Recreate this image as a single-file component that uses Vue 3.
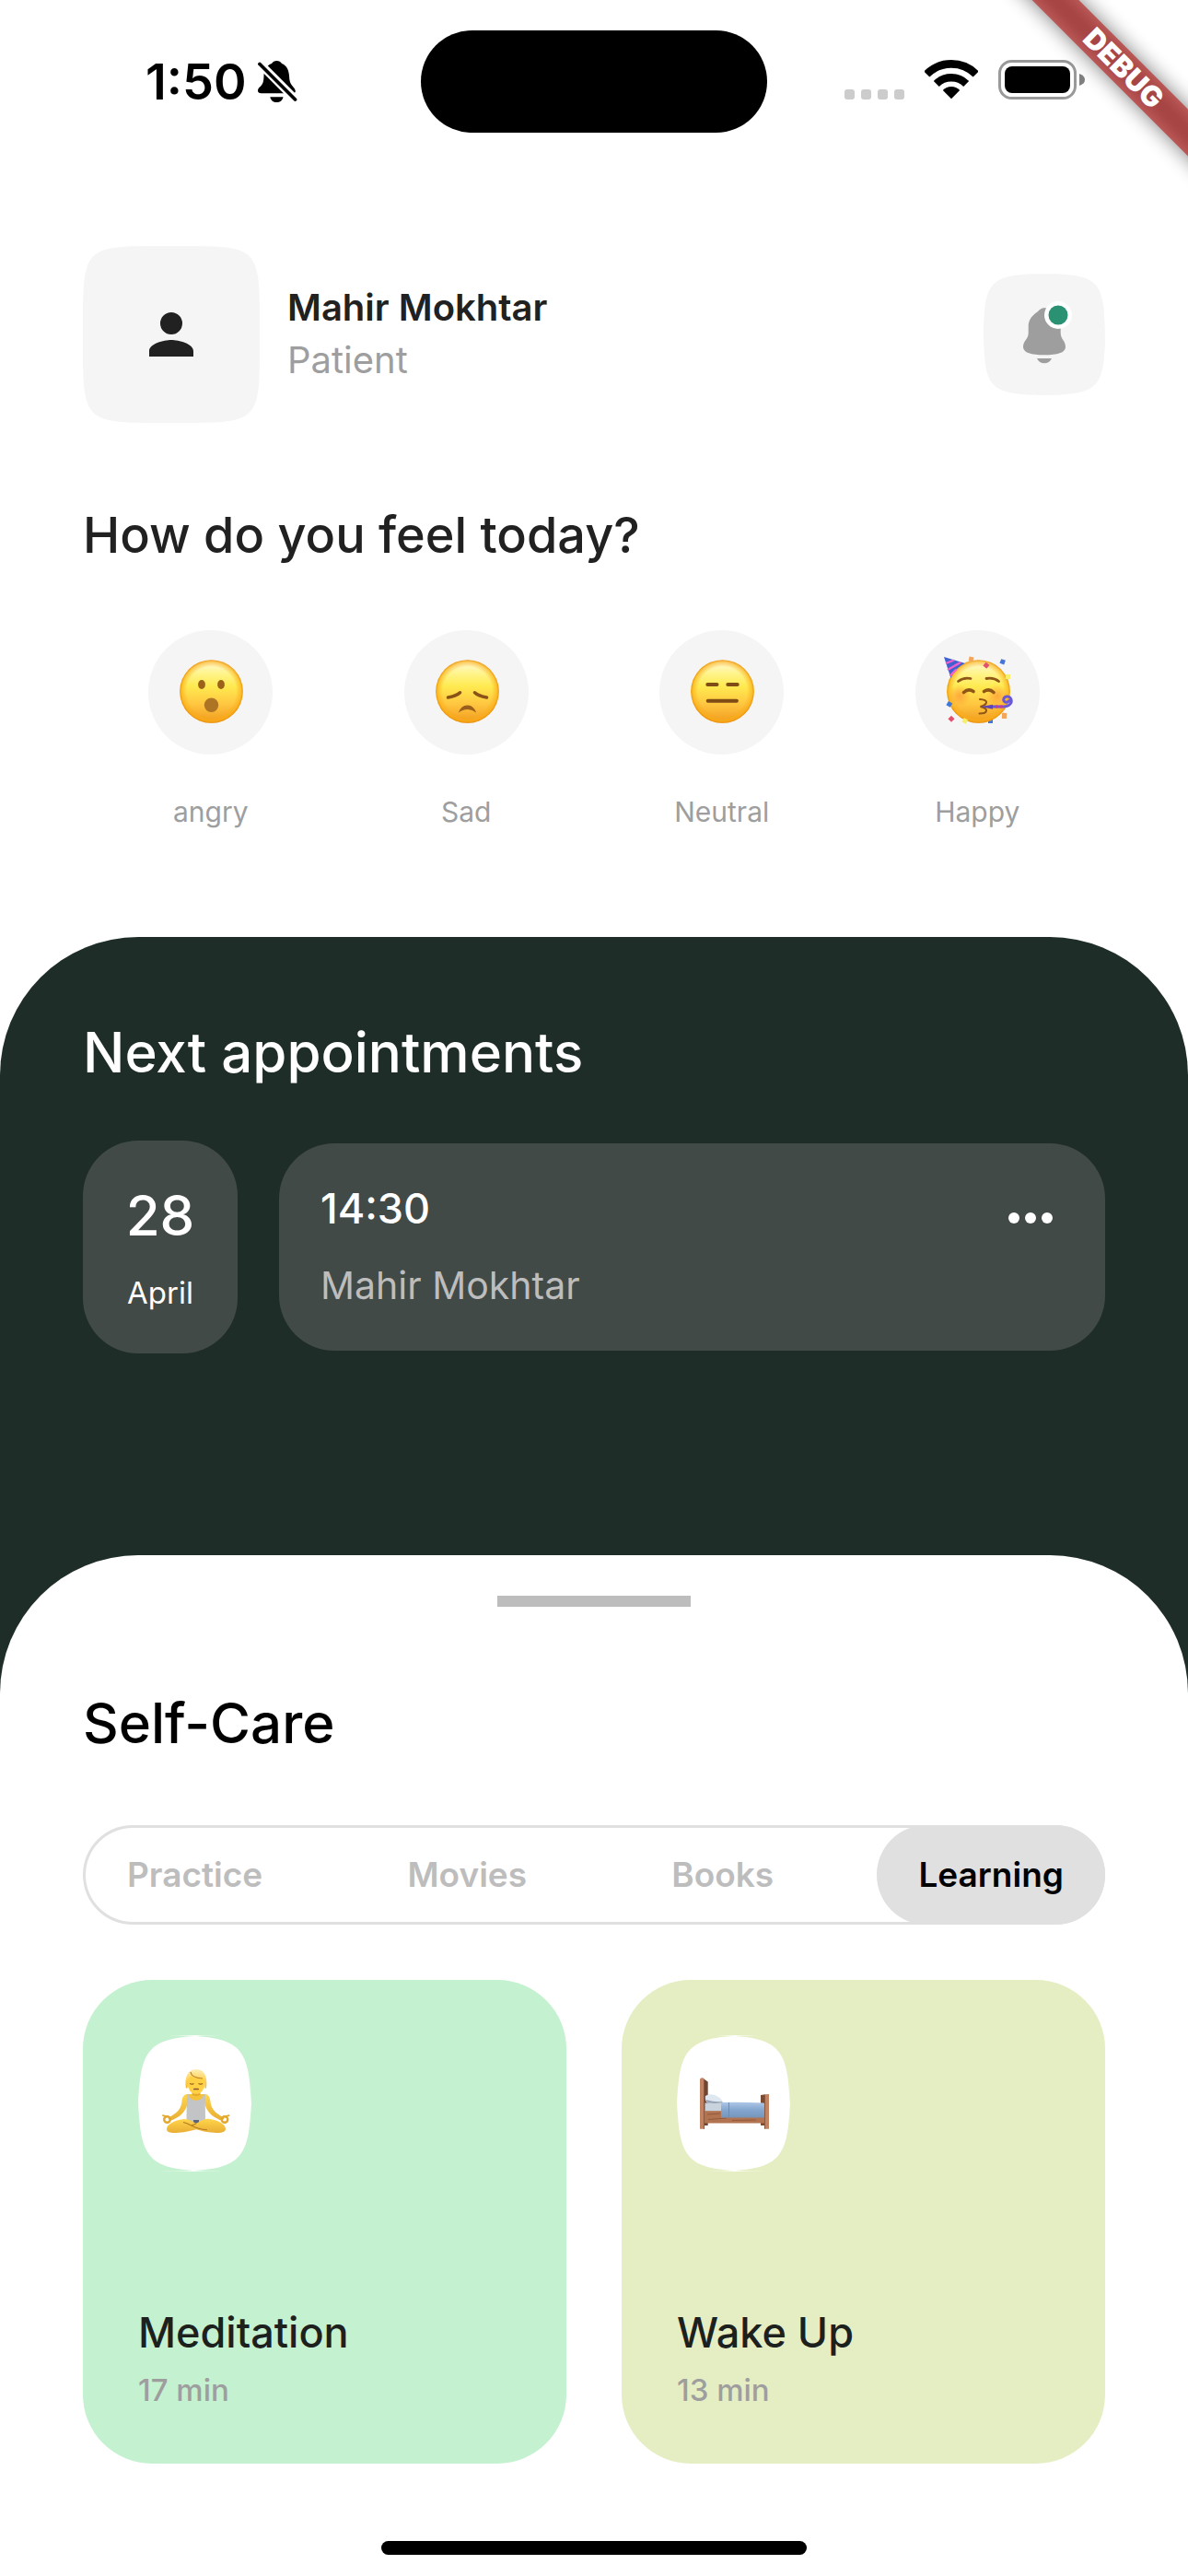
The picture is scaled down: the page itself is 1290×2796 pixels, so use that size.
<script setup>
import { ref } from 'vue'

const moods = [
  { id: 'angry', label: 'angry' },
  { id: 'sad', label: 'Sad' },
  { id: 'neutral', label: 'Neutral' },
  { id: 'happy', label: 'Happy' },
]

const confetti = [
  { x: 61, y: 32, fill: '#f3a65a', turn: 10 },
  { x: 77, y: 39, fill: '#e2506f', turn: 40 },
  { x: 95, y: 35, fill: '#4775d6', turn: 20 },
  { x: 101, y: 51, fill: '#f7ee6b', turn: 0 },
  { x: 37, y: 81, fill: '#3f78d8', turn: 30 },
  { x: 39, y: 97, fill: '#e2506f', turn: 45 },
  { x: 54, y: 99, fill: '#f7ee6b', turn: 30 },
  { x: 82, y: 98, fill: '#3f78d8', turn: 0 },
  { x: 97, y: 93, fill: '#f3a65a', turn: 8 },
]

const tabs = ['Practice', 'Movies', 'Books', 'Learning']
const activeTab = ref('Learning')

const activities = [
  { id: 'meditation', title: 'Meditation', time: '17 min' },
  { id: 'wake', title: 'Wake Up', time: '13 min' },
]

// Rounded shape whose corners ease continuously into the sides.
function softRect(w, h, r) {
  return [
    `M0 ${r}C0 0 0 0 ${r} 0`,
    `L${w - r} 0C${w} 0 ${w} 0 ${w} ${r}`,
    `L${w} ${h - r}C${w} ${h} ${w} ${h} ${w - r} ${h}`,
    `L${r} ${h}C0 ${h} 0 ${h} 0 ${h - r}Z`,
  ].join('')
}
</script>

<template>
  <div class="screen">
    <header class="status">
      <div class="status-left">
        <span class="clock">1:50</span>
        <svg class="muted" viewBox="0 0 43 46" aria-label="Silent mode">
          <path d="M20.500 0c2.500 0 4.300 1 5.500 3 5 2 7.500 6.500 8 13 .4 6.500 1 8.500 4.500 12.500 3.500 4 3 6.800-1.500 6.800H3.500C-.8 35.300-1 31 2 28.500c3.500-3 4.300-5.500 4.500-12.500.3-6.500 3-11 8.500-13 1.200-2 3-3 5.500-3z" />
          <path d="M13.300 39.200h14.200c-.8 4-3.500 5.900-7.100 5.900s-6.300-1.900-7.100-5.900z" />
          <path d="M2 3l39 39" stroke="#fff" stroke-width="9" />
          <path d="M2 3.500L40.500 42" stroke="#000" stroke-width="3.800" stroke-linecap="round" />
        </svg>
      </div>
      <div class="island"></div>
      <div class="status-right">
        <div class="signal"><i v-for="n in 4" :key="n"></i></div>
        <svg class="wifi" viewBox="0 0 58 43" aria-label="Wi-Fi" fill="none" stroke="#000">
          <path d="M2.300 15.500a37.700 37.700 0 0 1 53.400 0" stroke-width="8.600" />
          <path d="M12.800 26a22.900 22.900 0 0 1 32.400 0" stroke-width="8.400" />
          <path d="M29 42.200l-9.200-9.300a13 13 0 0 1 18.400 0z" fill="#000" stroke="none" />
        </svg>
        <svg class="battery" viewBox="0 0 95 43" aria-label="Battery full">
          <rect x="1.500" y="1.500" width="82" height="40" rx="13" fill="none" stroke="#999" stroke-width="3" />
          <rect x="7" y="7" width="71" height="29" rx="8" />
          <path d="M88 15q6 2 6 6.500T88 28z" fill="#808080" />
        </svg>
      </div>
    </header>

    <svg class="debug" viewBox="0 0 250 250" aria-label="Debug build">
      <defs>
        <filter id="ribbon-blur" x="-30%" y="-100%" width="160%" height="300%">
          <feGaussianBlur stdDeviation="11" />
        </filter>
      </defs>
      <g transform="translate(178 72) rotate(45)">
        <rect x="-200" y="-18" width="400" height="36" fill="#000" opacity=".5" filter="url(#ribbon-blur)" />
        <rect x="-200" y="-18" width="400" height="36" fill="#b71c1c" opacity=".63" />
        <text class="debug-text" x="3" y="11" text-anchor="middle">DEBUG</text>
      </g>
    </svg>

    <section class="profile">
      <svg class="avatar" viewBox="0 0 192 192" aria-label="Profile picture">
        <path :d="softRect(192, 192, 90)" fill="#f5f5f5" />
        <path d="M96 96a12 12 0 1 0 0-24 12 12 0 0 0 0 24zM96 102c-8 0-24 4-24 12v6h48v-6c0-8-16-12-24-12z" fill="#212121" />
      </svg>
      <div class="who">
        <p class="name">Mahir Mokhtar</p>
        <p class="role">Patient</p>
      </div>
      <button class="alerts" type="button" aria-label="Notifications">
        <svg viewBox="0 0 132 132">
          <path :d="softRect(132, 132, 90)" fill="#f5f5f5" />
          <path d="M66 37.300c-4 0-5.200 2.500-7.500 4.200C52.500 45.500 48.700 50.500 48.700 57v7.500c0 6.500-5.700 8.500-5.700 15 0 6.500 9 8.800 23 8.800s23-2.300 23-8.800c0-6.500-5.300-8.500-5.300-15V57c0-6.500-4.200-11.500-10.200-15.500-2.300-1.700-3.500-4.200-7.500-4.200zM58 92h16c-1.500 3.600-4.400 5.300-8 5.300S59.500 95.600 58 92z" fill="#9e9e9e" />
          <circle cx="81" cy="45" r="15" fill="#fff" />
          <circle cx="81" cy="45" r="10.500" fill="#2a9272" />
        </svg>
      </button>
    </section>

    <section class="feelings">
      <h1 class="question">How do you feel today?</h1>
      <div class="moods">
        <button v-for="mood in moods" :key="mood.id" class="mood" type="button">
          <svg class="face" viewBox="0 0 135 135" aria-hidden="true">
            <defs>
              <linearGradient :id="`skin-${mood.id}`" x1="0" y1="0" x2="0" y2="1">
                <stop offset="0" stop-color="#fff9dc" />
                <stop offset=".22" stop-color="#fff48a" />
                <stop offset=".42" stop-color="#ffea50" />
                <stop offset=".7" stop-color="#ffc640" />
                <stop offset="1" stop-color="#f09a1e" />
              </linearGradient>
              <radialGradient :id="`rim-${mood.id}`">
                <stop offset=".78" stop-color="#f7a516" stop-opacity="0" />
                <stop offset=".93" stop-color="#fbae14" stop-opacity=".6" />
                <stop offset="1" stop-color="#e8900f" stop-opacity=".95" />
              </radialGradient>
              <radialGradient :id="`blush-${mood.id}`">
                <stop offset="0" stop-color="#ff8a35" stop-opacity=".6" />
                <stop offset="1" stop-color="#ff8a35" stop-opacity="0" />
              </radialGradient>
            </defs>
            <circle cx="67.500" cy="67.500" r="67.500" fill="#f5f5f5" />
            <template v-if="mood.id === 'happy'">
              <rect v-for="c in confetti.slice(7)" :key="c.x" :x="c.x - 3" :y="c.y - 3" width="5" height="6" :fill="c.fill" />
            </template>
            <circle cx="68.500" cy="66.500" r="34.300" :fill="`url(#skin-${mood.id})`" />
            <circle cx="68.500" cy="66.500" r="34.300" :fill="`url(#rim-${mood.id})`" />

            <g v-if="mood.id === 'angry'" fill="#9c621a">
              <ellipse cx="58" cy="59" rx="3.900" ry="5" />
              <ellipse cx="79" cy="59" rx="3.900" ry="5" />
              <circle cx="68.500" cy="81.300" r="7.700" fill="#ad7424" />
            </g>
            <g v-else-if="mood.id === 'sad'" fill="none" stroke="#8a5217" stroke-width="3.600" stroke-linecap="round">
              <path d="M47.500 73q9-1.500 13-5.200" />
              <path d="M76.500 67.800q4 3.700 13 5.200" />
              <path d="M58.800 89.500q3-8 9.700-8t9.700 8q-4.500-3.500-9.700-3.500t-9.700 3.500z" fill="#9a5f1a" stroke="none" />
            </g>
            <g v-else-if="mood.id === 'neutral'" fill="none" stroke="#7f4c16" stroke-width="4" stroke-linecap="round">
              <path d="M52.300 59h10.200M74.300 59h10.400M52.700 76.700h31.200" />
            </g>
            <g v-else>
              <circle cx="48" cy="71" r="12" :fill="`url(#blush-${mood.id})`" />
              <circle cx="89" cy="71" r="12" :fill="`url(#blush-${mood.id})`" />
              <path d="M31 29l23 7c-7 3-12.500 8.500-15.500 16z" fill="#3f62cf" />
              <path d="M33 36l9-3.500M35 43l14-8M37.500 49.500l7-7" stroke="#f25fd0" stroke-width="2.400" />
              <g fill="none" stroke="#8f5618" stroke-linecap="round">
                <path d="M46.500 55.500q6-4.500 13.500-3M77 52.500q8-1.500 13.500 3" stroke-width="2.800" />
                <path d="M52.500 67.500q5-4.500 10.500-1M74.500 66.500q5.500-3.500 10.500 1" stroke-width="3.600" />
                <path d="M70 75q7.500.5 7 3.500t-6.500 4.500q7 1.500 6.500 4.500t-7.500 3" stroke-width="2" />
              </g>
              <path d="M71 83l13-2.300v5z" fill="#6045b5" />
              <path d="M84 83h12q6-.5 8-4.500c1-4-1.500-7-5-6.500s-4.500 5-1.500 6 4.500-1 3.500-2.500" fill="none" stroke="#6b58d6" stroke-width="3" />
              <path d="M87 83h2.500M92 83h2.500" stroke="#d8348c" stroke-width="3" />
              <rect v-for="c in confetti.slice(0, 7).concat(confetti[8])" :key="c.x" :x="c.x - 3" :y="c.y - 3" width="5" height="5" :fill="c.fill" :transform="`rotate(${c.turn} ${c.x} ${c.y})`" />
            </g>
          </svg>
          <span class="mood-label">{{ mood.label }}</span>
        </button>
      </div>
    </section>

    <section class="appointments">
      <div class="agenda">
        <h2 class="agenda-title">Next appointments</h2>
        <div class="agenda-row">
          <div class="date">
            <span class="day">28</span>
            <span class="month">April</span>
          </div>
          <article class="visit">
            <div>
              <p class="visit-time">14:30</p>
              <p class="visit-name">Mahir Mokhtar</p>
            </div>
            <button class="more" type="button" aria-label="More options">
              <svg viewBox="0 0 24 24" fill="#fff">
                <circle cx="6" cy="12" r="2" />
                <circle cx="12" cy="12" r="2" />
                <circle cx="18" cy="12" r="2" />
              </svg>
            </button>
          </article>
        </div>
      </div>

      <section class="sheet">
        <div class="handle"></div>
        <h2 class="sheet-title">Self-Care</h2>
        <div class="tabs" role="tablist">
          <button
            v-for="tab in tabs"
            :key="tab"
            class="tab"
            :class="{ active: tab === activeTab }"
            type="button"
            role="tab"
            :aria-selected="tab === activeTab"
            @click="activeTab = tab"
          >{{ tab }}</button>
        </div>
        <div class="cards">
          <article v-for="item in activities" :key="item.id" class="card" :class="item.id">
            <svg class="card-icon" viewBox="0 0 123 148" aria-hidden="true">
              <path :d="softRect(123, 148, 120)" fill="#fff" />
              <g v-if="item.id === 'meditation'">
                <defs>
                  <linearGradient id="body-tone" x1="0" y1="0" x2="0" y2="1">
                    <stop offset="0" stop-color="#ffd54a" />
                    <stop offset="1" stop-color="#e9ae35" />
                  </linearGradient>
                  <linearGradient id="hair-tone" x1="0" y1="0" x2="0" y2="1">
                    <stop offset="0" stop-color="#fdeeb8" />
                    <stop offset=".5" stop-color="#ffd660" />
                    <stop offset="1" stop-color="#f5b52c" />
                  </linearGradient>
                </defs>
                <path d="M53 64c-4 .5-5 4-5.500 8-.5 5-2.500 8.500-5.500 11.500-3 2.500-6.500 4.500-9.500 6.500l2 3c4.500-1.500 9-4 12.500-7 3.500-3.500 5.500-7 6.500-11z" fill="url(#body-tone)" />
                <path d="M73 64c4 .5 5 4 5.500 8 .5 5 2.500 8.500 5.500 11.500 3 2.500 6.500 4.500 9.500 6.500l-2 3c-4.500-1.500-9-4-12.500-7-3.500-3.500-5.500-7-6.500-11z" fill="url(#body-tone)" />
                <path d="M53 64h20v10H53z" fill="#f6c23c" />
                <path d="M53 64.300h2c.5 4.500 4 6.500 8 6.500s7.500-2 8-6.500h2c-.5 8 0 19 0 28.500l-4 9H58l-5.500-9c0-9.500.5-20.500.5-28.500z" fill="#c3c4c6" />
                <path d="M58.500 60h9v4.500q-4.500 3-9 0z" fill="#e6aa2b" />
                <ellipse cx="63" cy="51.500" rx="9.700" ry="12.300" fill="#ffd043" />
                <path d="M52 57.500c-1-5-1.500-20.500 11-20.500s12 15.500 11 20.500h-1.500c0-5 0-7-1.500-10-5 0-10-.5-14-3.500-2.500 3-3 8-3.500 13.500z" fill="url(#hair-tone)" />
                <path d="M57 40c.5 4.500 6 6.500 13 7" fill="none" stroke="#bf7c20" stroke-width="1.200" />
                <path d="M56 52.500q2.500 1.200 4.500 0M65.500 52.500q2.500 1.200 4.500 0" fill="none" stroke="#8e5b1c" stroke-width="1.100" />
                <path d="M60.800 58.500h4.400" stroke="#8a5236" stroke-width="1.700" stroke-linecap="round" />
                <path d="M60 92h6v4h-6z" fill="#5b6478" />
                <path d="M50 91c-9 1-19 5-19 11 0 4 6 4.500 13 3.800 8-.6 14-2 19-3.500 5 1.500 11 3 19 3.500 7 .6 13 0 13-4 0-6-10-10-19-11-6 .5-9 3-13 5-4-2-7-4.500-13-4.800z" fill="url(#body-tone)" />
                <path d="M49 94.500c6 1.500 11 5 16 6.500q5 1.500 10 1.700M63 96l-5 2" fill="none" stroke="#b5791f" stroke-width="1.100" />
                <g fill="none" stroke="#e3a92e" stroke-width="2.400">
                  <circle cx="31.500" cy="91.500" r="3.300" />
                  <circle cx="94" cy="91.500" r="3.300" />
                  <path d="M30 88l-3-.8M95.500 88l3-.8" stroke-linecap="round" stroke-width="1.800" />
                </g>
              </g>
              <g v-else>
                <defs>
                  <linearGradient id="quilt-tone" x1="0" y1="0" x2="0" y2="1">
                    <stop offset="0" stop-color="#adc6e6" />
                    <stop offset=".5" stop-color="#84a6cf" />
                    <stop offset="1" stop-color="#7595bb" />
                  </linearGradient>
                </defs>
                <path d="M30 48l3.700 2.500V98H30z" fill="#6f4630" />
                <path d="M91 65l5-.8V98h-5z" fill="#7b4c34" />
                <path d="M30 81.500h66v14H30z" fill="#b27350" />
                <path d="M33 86l14-1M34 91.500l20-1.500M60 92.500l26-.5" stroke="#925a3c" stroke-width="1" />
                <path d="M30.500 73.500H50v8.700H30.500z" fill="#c8d3de" />
                <path d="M31 66c4-3 10-2 14 1 4 2.500 5 4.500 4.500 6.500H33c-2-1.500-2.500-5-2-7.500z" fill="#dfe7f1" />
                <path d="M33 73.500q8 .8 16 0l.6-1.500q-8 1-18-2z" fill="#97a4b5" />
                <path d="M48 73q24-.5 46 .6 1.500 0 1.500 2v13.800H48z" fill="url(#quilt-tone)" />
                <path d="M56.500 73v16.300" stroke="#6c8cb4" stroke-width="1" />
                <path d="M25 48q0-1.700 2.500-1.700T30 48v53.800h-5zM95.500 64.200l4.500-.3v37.900h-4.500z" fill="#c08260" />
                <path d="M29.500 48v53.800M95.500 65v36.800" stroke="#8a573c" stroke-width="1" />
              </g>
            </svg>
            <div>
              <h3 class="card-title">{{ item.title }}</h3>
              <p class="card-time">{{ item.time }}</p>
            </div>
          </article>
        </div>
        <div class="home-bar"></div>
      </section>
    </section>
  </div>
</template>

<style>
body {
  margin: 0;
  background: #fff;
}
</style>

<style scoped>
.screen {
  position: relative;
  overflow: hidden;
  font-family: Inter, 'Noto Sans', sans-serif;
  color: #212121;
  background: #fff;
}

h1,
h2,
h3,
p {
  margin: 0;
  font-weight: 400;
}

button {
  padding: 0;
  border: 0;
  background: none;
  font: inherit;
  color: inherit;
  cursor: pointer;
}

svg {
  display: block;
}

.status {
  display: grid;
  grid-template-columns: 1fr 376px 1fr;
  align-items: center;
  height: 177px;
}

.status-left {
  display: flex;
  align-items: center;
  gap: 12px;
  padding-left: 158px;
}

.clock {
  font-size: 54px;
  font-weight: 600;
  line-height: 60px;
  color: #000;
}

.muted {
  width: 43px;
  height: 46px;
}

.island {
  height: 111px;
  border-radius: 56px;
  background: #000;
}

.status-right {
  display: flex;
  justify-content: flex-end;
  align-items: center;
  gap: 22px;
  padding: 0 111px 4px 0;
}

.signal {
  display: flex;
  align-self: flex-end;
  gap: 7px;
}

.signal i {
  width: 11px;
  height: 11px;
  border-radius: 3px;
  background: #ccc;
}

.wifi {
  width: 58px;
  height: 43px;
}

.battery {
  width: 95px;
  height: 43px;
}

.debug {
  position: absolute;
  top: 0;
  right: 0;
  width: 250px;
  height: 250px;
  pointer-events: none;
}

.debug-text {
  font-size: 31px;
  font-weight: 900;
  fill: #fff;
}

.profile {
  display: flex;
  align-items: center;
  gap: 30px;
  padding: 90px 90px 0;
}

.avatar {
  width: 192px;
  height: 192px;
}

.who {
  flex: 1;
  padding-bottom: 3px;
  font-size: 40px;
  line-height: 57px;
}

.name {
  font-weight: 600;
}

.role {
  color: #9e9e9e;
}

.alerts {
  width: 132px;
  height: 132px;
}

.feelings {
  padding: 90px 90px 118px;
}

.question {
  font-size: 54px;
  font-weight: 500;
  line-height: 64px;
}

.moods {
  display: grid;
  grid-template-columns: repeat(4, 1fr);
  margin-top: 71px;
}

.mood {
  display: flex;
  flex-direction: column;
  align-items: center;
  gap: 44px;
}

.face {
  width: 135px;
  height: 135px;
}

.mood-label {
  font-size: 30px;
  line-height: 36px;
  color: #9e9e9e;
}

.appointments {
  border-radius: 150px 150px 0 0;
  background: #1e2d28;
  color: #fff;
}

.agenda {
  padding: 90px 90px 219px;
}

.agenda-title {
  font-size: 60px;
  font-weight: 500;
  line-height: 70px;
}

.agenda-row {
  display: flex;
  align-items: center;
  gap: 45px;
  margin-top: 61px;
}

.date,
.visit {
  box-sizing: border-box;
  padding: 45px;
  border-radius: 60px;
  background: #414a46;
}

.date {
  display: flex;
  flex-direction: column;
  align-items: center;
  gap: 27px;
  width: 168px;
}

.day {
  font-size: 60px;
  font-weight: 500;
  line-height: 72px;
}

.month {
  font-size: 33px;
  line-height: 42px;
}

.visit {
  display: flex;
  flex: 1;
  justify-content: space-between;
  align-items: flex-start;
}

.visit-time {
  margin-bottom: 31px;
  font-size: 45px;
  font-weight: 500;
  line-height: 52px;
}

.visit-name {
  font-size: 41px;
  line-height: 52px;
  color: #bdbdbd;
}

.more {
  width: 72px;
  height: 72px;
}

.sheet {
  padding: 44px 90px 23px;
  border-radius: 150px 150px 0 0;
  background: #fff;
  color: #000;
}

.handle {
  width: 210px;
  height: 12px;
  margin: 0 auto 90px;
  background: #bdbdbd;
}

.sheet-title {
  font-size: 60px;
  font-weight: 500;
  line-height: 72px;
}

.tabs {
  display: flex;
  justify-content: space-between;
  margin-top: 75px;
  padding-left: 3px;
  border-radius: 54px;
  box-shadow: inset 0 0 0 3px #e0e0e0;
}

.tab {
  padding: 0 45px;
  border-radius: 54px;
  font-size: 37px;
  font-weight: 600;
  line-height: 108px;
  color: #bdbdbd;
}

.tab.active {
  background: #e0e0e0;
  color: #000;
}

.cards {
  display: grid;
  grid-template-columns: 1fr 1fr;
  gap: 60px;
  margin-top: 60px;
}

.card {
  display: flex;
  flex-direction: column;
  justify-content: space-between;
  box-sizing: border-box;
  aspect-ratio: 1;
  padding: 60px;
  border-radius: 75px;
}

.card.meditation {
  background: #c4f1cf;
}

.card.wake {
  background: #e5eec3;
}

.card-icon {
  width: 123px;
  height: 148px;
}

.card-title {
  margin-bottom: 15px;
  font-size: 45px;
  font-weight: 500;
  line-height: 54px;
  color: #1c211d;
}

.card-time {
  font-size: 33px;
  font-weight: 500;
  line-height: 40px;
  color: #9e9e9e;
}

.home-bar {
  width: 462px;
  height: 15px;
  margin: 84px auto 0;
  border-radius: 8px;
  background: #000;
}
</style>
